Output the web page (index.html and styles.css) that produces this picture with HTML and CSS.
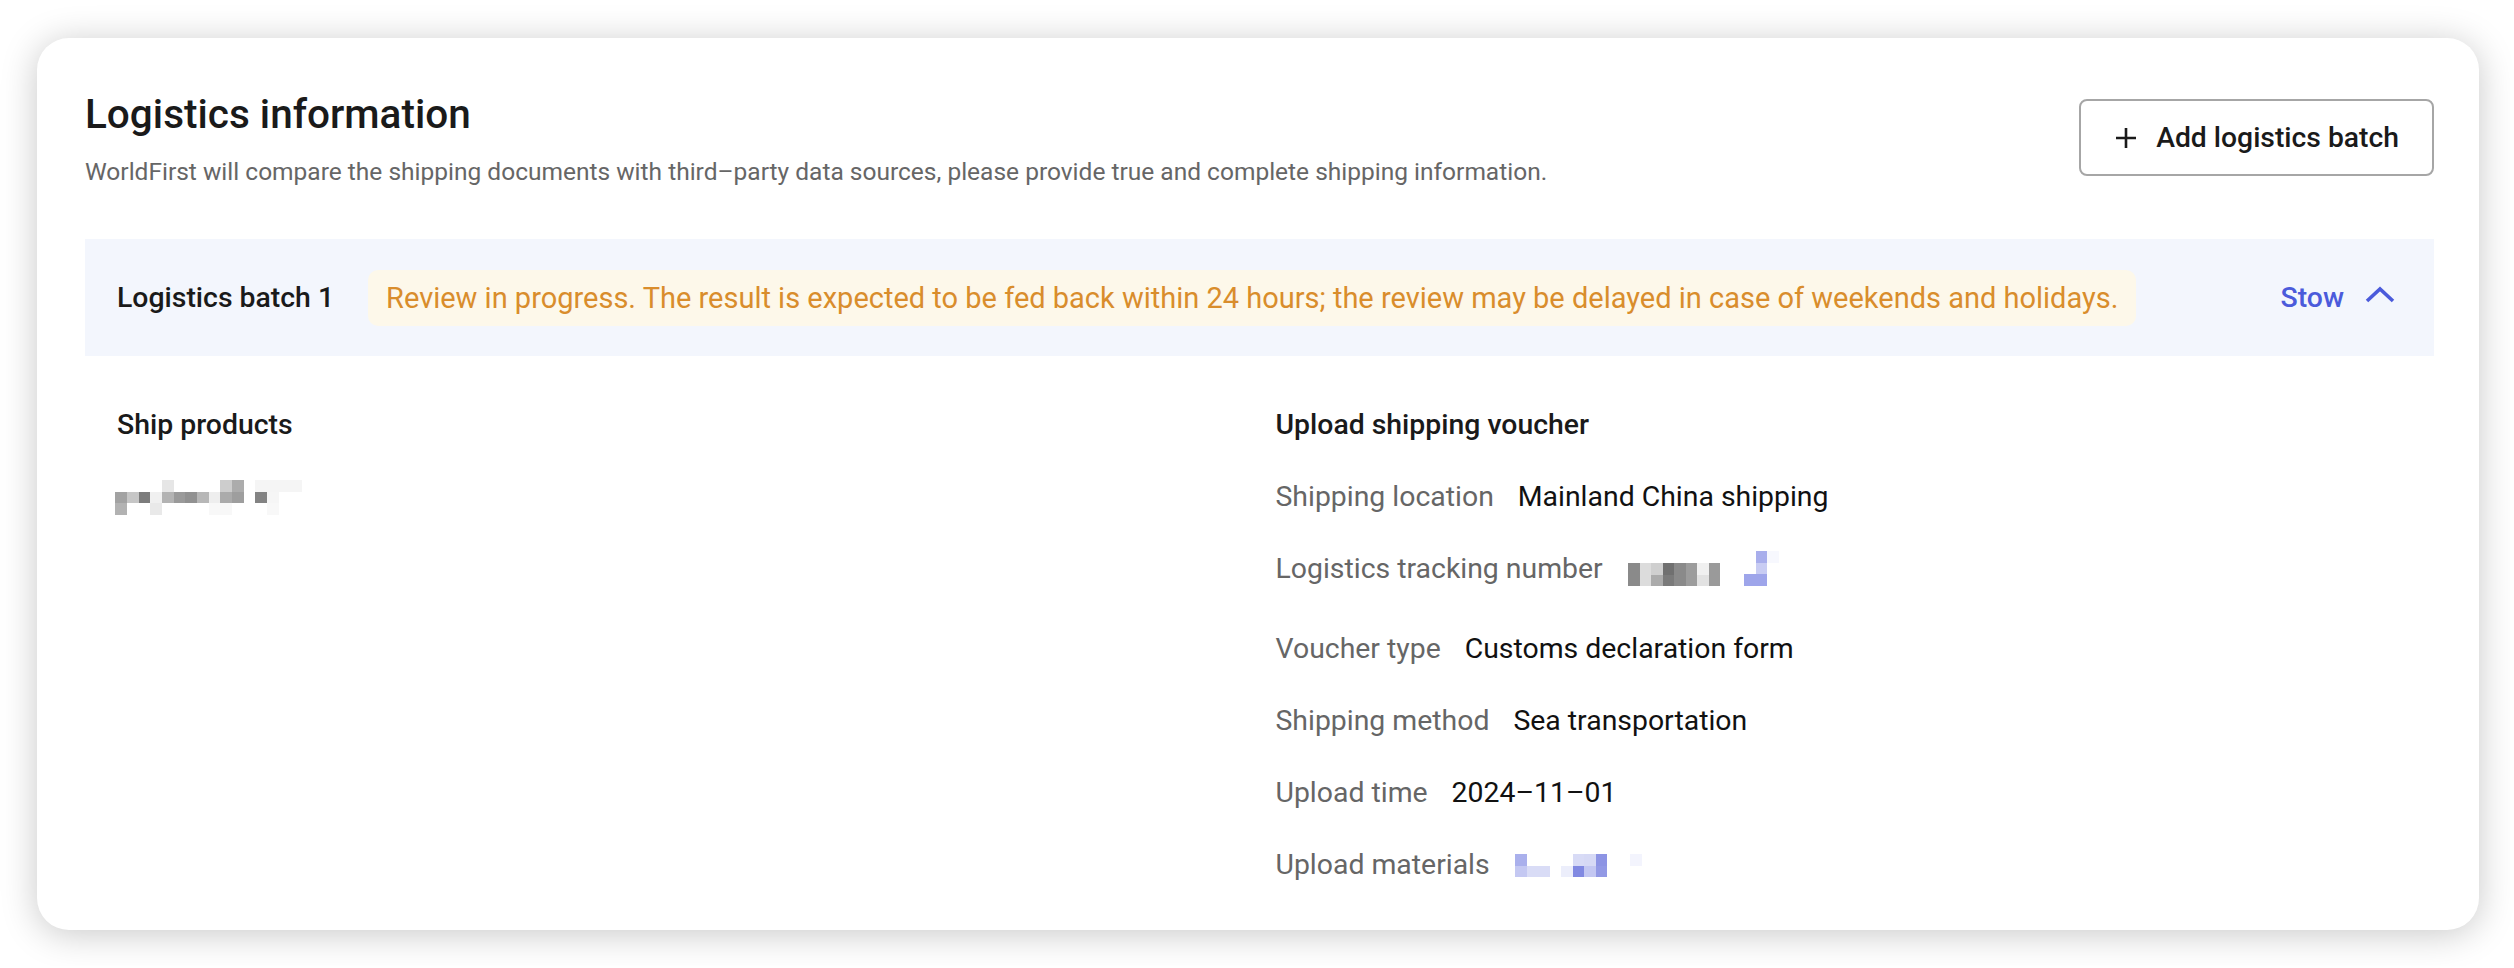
FILE: index.html
```html
<!DOCTYPE html>
<html lang="en">
<head>
<meta charset="utf-8">
<title>Logistics information</title>
<link rel="stylesheet" href="styles.css">
</head>
<body>
<div class="page">
  <section class="card">
    <header class="card-head">
      <div class="head-text">
        <h1 class="title">Logistics information</h1>
        <p class="desc">WorldFirst will compare the shipping documents with third–party data sources, please provide true and complete shipping information.</p>
      </div>
      <button class="add-btn" type="button">
        <svg class="plus" width="24" height="24" viewBox="0 0 24 24"><path d="M12 2v20M2 12h20" stroke="#1a1a1a" stroke-width="2.6" fill="none"/></svg>
        <span>Add logistics batch</span>
      </button>
    </header>

    <div class="batch-bar">
      <div class="batch-left">
        <span class="batch-name">Logistics batch 1</span>
        <span class="batch-notice">Review in progress. The result is expected to be fed back within 24 hours; the review may be delayed in case of weekends and holidays.</span>
      </div>
      <button class="stow" type="button">
        <span>Stow</span>
        <svg width="30" height="18" viewBox="0 0 30 18"><polyline points="2,15 15,3 28,15" fill="none" stroke="#4b5bdb" stroke-width="3.6"/></svg>
      </button>
    </div>

    <div class="batch-body">
      <div class="col">
        <h2 class="col-title">Ship products</h2>
        <div class="row">
          <svg class="mosaic m1" width="187" height="35" viewBox="0 0 16 3" shape-rendering="crispEdges">
            <rect x="4" y="0" width="1" height="1" fill="#e6e6e6"/>
            <rect x="9" y="0" width="1" height="1" fill="#cdcdcd"/>
            <rect x="10" y="0" width="1" height="1" fill="#acacac"/>
            <rect x="12" y="0" width="4" height="1" fill="#f5f5f5"/>
            <rect x="0" y="1" width="1" height="1" fill="#a2a2a2"/>
            <rect x="1" y="1" width="1" height="1" fill="#c6c6c6"/>
            <rect x="2" y="1" width="1" height="1" fill="#7c7c7c"/>
            <rect x="3" y="1" width="1" height="1" fill="#f0f0f0"/>
            <rect x="4" y="1" width="1" height="1" fill="#b3b3b3"/>
            <rect x="5" y="1" width="1" height="1" fill="#9a9a9a"/>
            <rect x="6" y="1" width="1" height="1" fill="#919191"/>
            <rect x="7" y="1" width="1" height="1" fill="#b7b7b7"/>
            <rect x="8" y="1" width="1" height="1" fill="#eeeeee"/>
            <rect x="9" y="1" width="1" height="1" fill="#ababab"/>
            <rect x="10" y="1" width="1" height="1" fill="#9e9e9e"/>
            <rect x="12" y="1" width="1" height="1" fill="#838383"/>
            <rect x="13" y="1" width="1" height="1" fill="#f6f6f6"/>
            <rect x="0" y="2" width="1" height="1" fill="#b2b2b2"/>
            <rect x="3" y="2" width="1" height="1" fill="#e9e9e9"/>
            <rect x="8" y="2" width="2" height="1" fill="#f8f8f8"/>
            <rect x="13" y="2" width="1" height="1" fill="#f8f8f8"/>
          </svg>
        </div>
      </div>

      <div class="col">
        <h2 class="col-title">Upload shipping voucher</h2>
        <div class="row"><span class="label">Shipping location</span><span class="value">Mainland China shipping</span></div>
        <div class="row row-tall">
          <span class="label">Logistics tracking number</span>
          <span class="value value-media">
            <svg class="mosaic" width="94" height="23" viewBox="0 0 8 2" shape-rendering="crispEdges">
              <rect x="0" y="0" width="1" height="2" fill="#8a8a8a"/>
              <rect x="1" y="0" width="1" height="2" fill="#dcdcdc"/>
              <rect x="2" y="0" width="1" height="1" fill="#cfcfcf"/>
              <rect x="2" y="1" width="1" height="1" fill="#ababab"/>
              <rect x="3" y="0" width="1" height="1" fill="#707070"/>
              <rect x="3" y="1" width="1" height="1" fill="#7a7a7a"/>
              <rect x="4" y="0" width="1" height="2" fill="#8a8a8a"/>
              <rect x="5" y="0" width="1" height="2" fill="#9c9c9c"/>
              <rect x="6" y="0" width="1" height="1" fill="#f0f0f0"/>
              <rect x="6" y="1" width="1" height="1" fill="#e2e2e2"/>
              <rect x="7" y="0" width="1" height="2" fill="#9a9a9a"/>
            </svg>
            <svg class="mosaic" width="35" height="35" viewBox="0 0 3 3" shape-rendering="crispEdges">
              <rect x="1" y="0" width="1" height="1" fill="#a8aeec"/>
              <rect x="2" y="0" width="1" height="1" fill="#f7f8fe"/>
              <rect x="1" y="1" width="1" height="1" fill="#c8ccf3"/>
              <rect x="0" y="2" width="2" height="1" fill="#9ea5ea"/>
            </svg>
          </span>
        </div>
        <div class="row"><span class="label">Voucher type</span><span class="value">Customs declaration form</span></div>
        <div class="row"><span class="label">Shipping method</span><span class="value">Sea transportation</span></div>
        <div class="row"><span class="label">Upload time</span><span class="value">2024–11–01</span></div>
        <div class="row">
          <span class="label">Upload materials</span>
          <span class="value value-media">
            <svg class="mosaic" width="129" height="23" viewBox="0 0 11 2" shape-rendering="crispEdges">
              <rect x="0" y="0" width="1" height="1" fill="#aab0ec"/>
              <rect x="5" y="0" width="1" height="1" fill="#d8dbf6"/>
              <rect x="6" y="0" width="1" height="1" fill="#d6d9f5"/>
              <rect x="7" y="0" width="1" height="1" fill="#8d94e4"/>
              <rect x="10" y="0" width="1" height="1" fill="#f3f4fd"/>
              <rect x="0" y="1" width="1" height="1" fill="#c4c8f2"/>
              <rect x="1" y="1" width="2" height="1" fill="#d9dcf6"/>
              <rect x="4" y="1" width="1" height="1" fill="#eceefb"/>
              <rect x="5" y="1" width="1" height="1" fill="#8189e2"/>
              <rect x="6" y="1" width="1" height="1" fill="#c3c7f2"/>
              <rect x="7" y="1" width="1" height="1" fill="#9299e5"/>
            </svg>
          </span>
        </div>
      </div>
    </div>
  </section>
</div>
</body>
</html>
```

FILE: styles.css
```css
* { box-sizing: border-box; }
html, body { margin: 0; padding: 0; background: #ffffff; }
body {
  font-family: Roboto, "Liberation Sans", Arial, sans-serif;
  color: #1a1a1a;
}
.page {
  padding: 38px 35px 36px 37px;
}
.card {
  background: #fff;
  border-radius: 32px;
  box-shadow: 0 4px 36px rgba(0, 0, 0, 0.22);
  padding: 52px 45px 47px 48px;
}
.card-head {
  display: flex;
  justify-content: space-between;
  align-items: flex-start;
}
.title {
  margin: 0;
  font-size: 40.5px;
  line-height: 48px;
  font-weight: 500;
  color: #1a1a1a;
}
.desc {
  margin: 17px 0 0;
  font-size: 24.5px;
  line-height: 34px;
  color: #666;
}
.add-btn {
  margin-top: 9px;
  height: 77px;
  padding: 0 33px 0 33px;
  display: flex;
  align-items: center;
  gap: 18px;
  background: #fff;
  border: 2px solid #a6a6a6;
  border-radius: 8px;
  font-family: inherit;
  font-size: 28.3px;
  font-weight: 500;
  color: #1a1a1a;
}
.batch-bar {
  margin-top: 50px;
  height: 117px;
  background: #f3f6fd;
  display: flex;
  align-items: center;
  justify-content: space-between;
  padding: 0 39px 0 32px;
}
.batch-left {
  display: flex;
  align-items: center;
  gap: 34px;
}
.batch-name {
  font-size: 28.4px;
  font-weight: 500;
  color: #1a1a1a;
  white-space: nowrap;
}
.batch-notice {
  background: #fdf8ea;
  color: #d98d2c;
  font-size: 29px;
  line-height: 56px;
  padding: 0 18px;
  border-radius: 10px;
  white-space: nowrap;
}
.stow {
  display: flex;
  align-items: center;
  gap: 21px;
  background: none;
  border: 0;
  padding: 0;
  font-family: inherit;
  font-size: 28.4px;
  font-weight: 500;
  color: #4b5bdb;
}
.stow svg { margin-top: -6px; }
.batch-body {
  display: grid;
  grid-template-columns: 1fr 1fr;
  column-gap: 32px;
  padding: 51px 32px 0;
}
.col {
  display: flex;
  flex-direction: column;
  gap: 36px;
}
.col-title {
  margin: 0;
  font-size: 28.4px;
  line-height: 36px;
  font-weight: 500;
  color: #1a1a1a;
}
.row {
  display: flex;
  align-items: center;
  gap: 24px;
  min-height: 36px;
  font-size: 28.4px;
  line-height: 36px;
}
.row-tall {
  align-items: flex-start;
  min-height: 44px;
}
.label { color: #666; white-space: nowrap; }
.value { color: #111; white-space: nowrap; }
.value-media {
  display: flex;
  align-items: flex-end;
  gap: 23px;
}
.mosaic { display: block; }
.m1 { margin-left: -2px; }
```
